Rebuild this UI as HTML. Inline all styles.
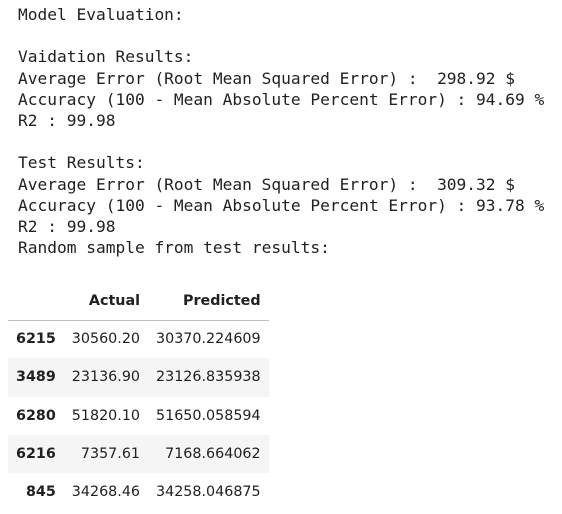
<!DOCTYPE html>
<html><head><style>
body{margin:0;background:#fff;width:562px;height:514px;overflow:hidden}
pre{position:absolute;left:18px;top:4px;margin:0;font-family:"DejaVu Sans Mono","Liberation Mono",monospace;font-size:16.2px;line-height:21.2px;color:#212121}
table{position:absolute;left:8px;top:282px;border-collapse:collapse;font-family:"DejaVu Sans","Liberation Sans",sans-serif;font-size:14.3px;color:#212121}
th,td{text-align:right;padding:0 8px 0 8px;height:38.3px;box-sizing:border-box}
thead th{height:38px;border-bottom:1px solid #bdbdbd}
tbody tr:nth-child(even){background:#f5f5f5}
</style></head><body>
<pre>Model Evaluation:

Vaidation Results:
Average Error (Root Mean Squared Error) :  298.92 $
Accuracy (100 - Mean Absolute Percent Error) : 94.69 %
R2 : 99.98

Test Results:
Average Error (Root Mean Squared Error) :  309.32 $
Accuracy (100 - Mean Absolute Percent Error) : 93.78 %
R2 : 99.98
Random sample from test results:</pre>
<table>
<thead><tr><th></th><th>Actual</th><th>Predicted</th></tr></thead>
<tbody>
<tr><th>6215</th><td>30560.20</td><td>30370.224609</td></tr>
<tr><th>3489</th><td>23136.90</td><td>23126.835938</td></tr>
<tr><th>6280</th><td>51820.10</td><td>51650.058594</td></tr>
<tr><th>6216</th><td>7357.61</td><td>7168.664062</td></tr>
<tr><th>845</th><td>34268.46</td><td>34258.046875</td></tr>
</tbody></table>
</body></html>
